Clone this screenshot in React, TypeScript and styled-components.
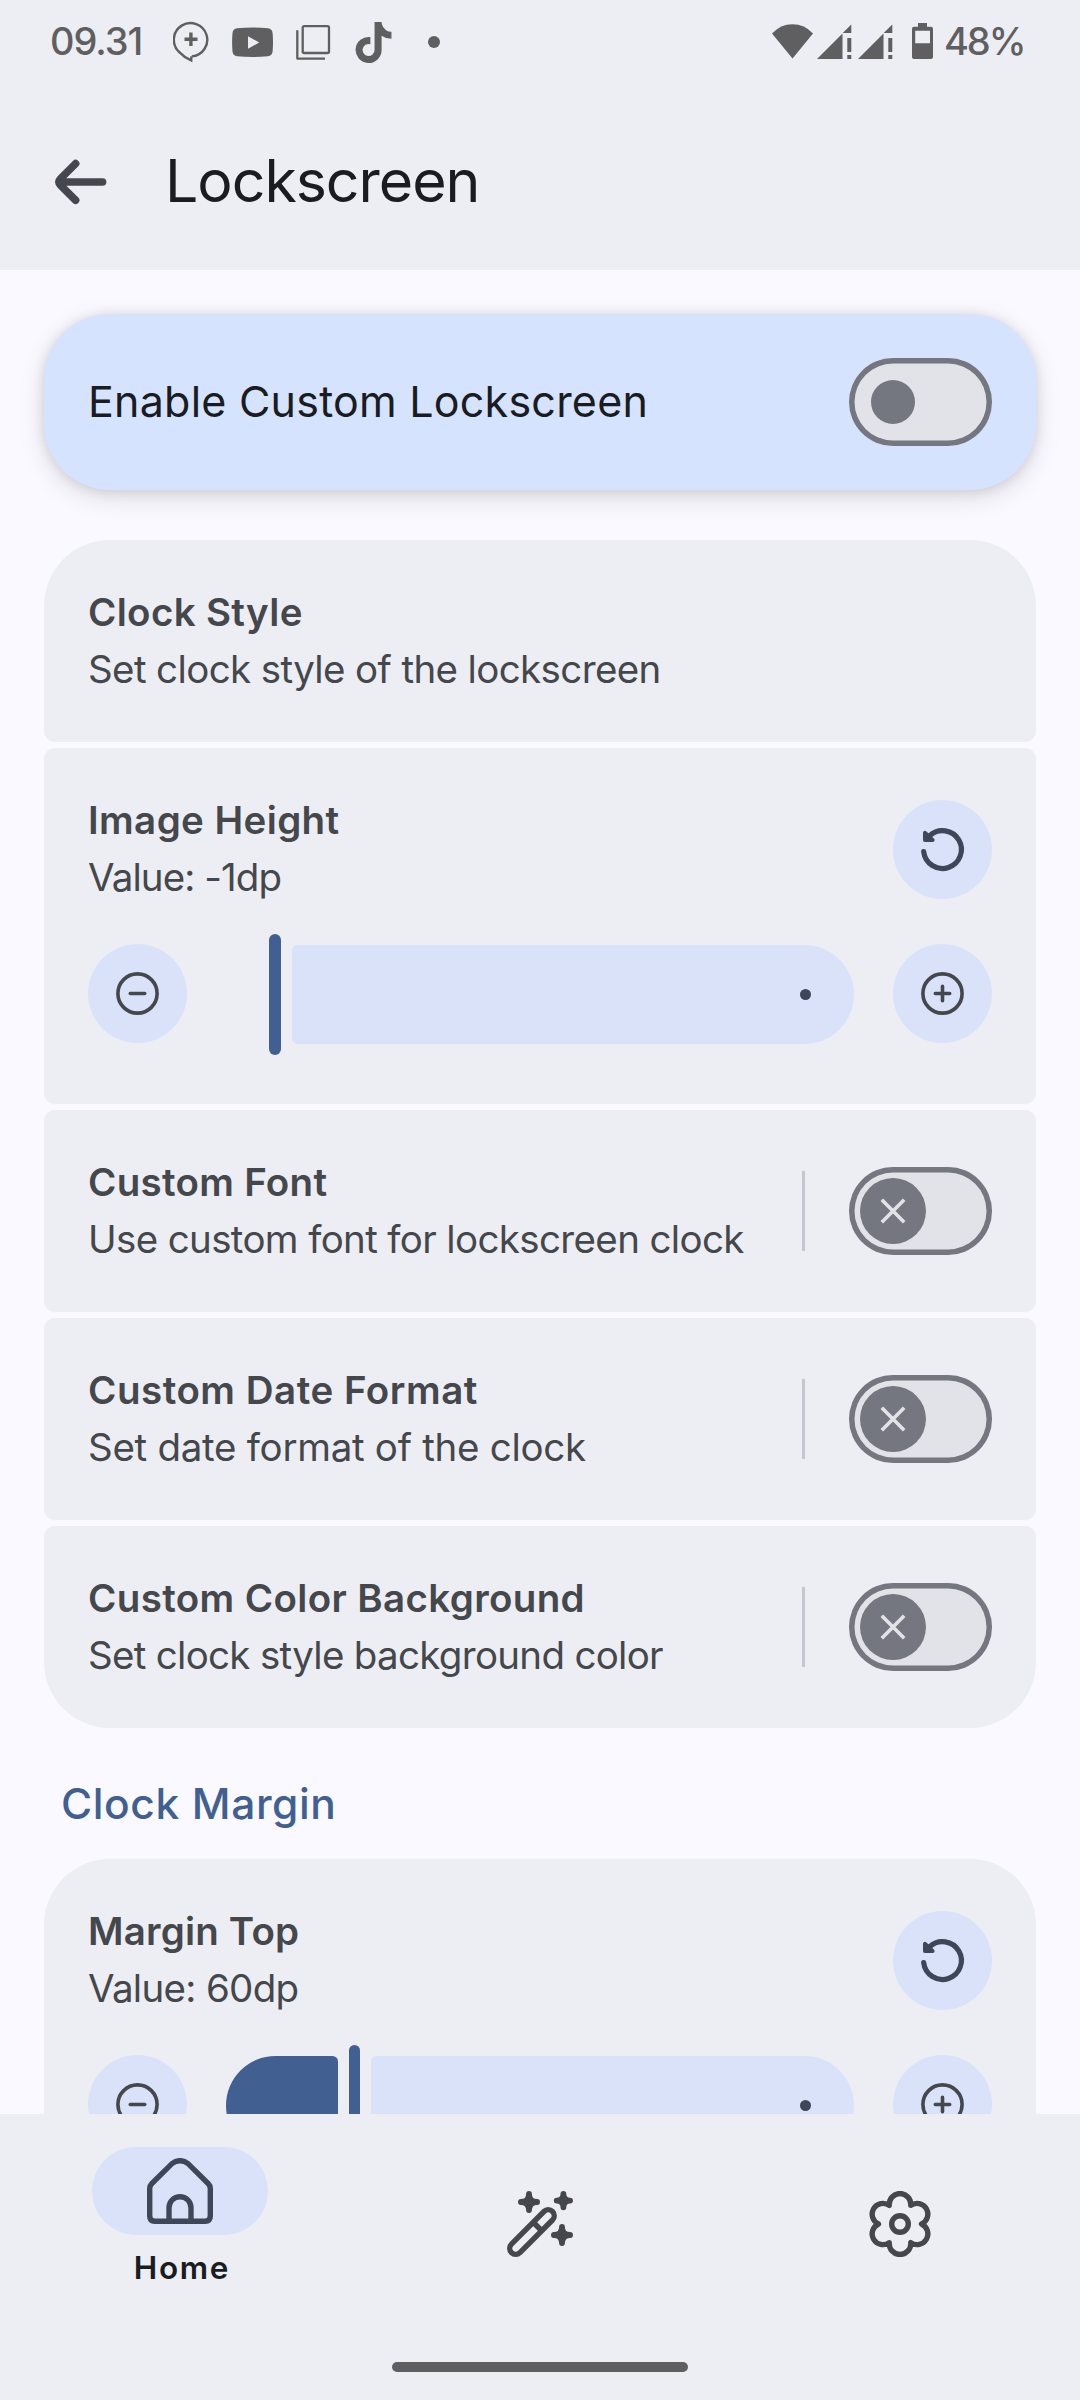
import React from "react";
import styled, { createGlobalStyle } from "styled-components";
import { FaTiktok } from "react-icons/fa";

const color = {
  surface: "#faf9ff",
  container: "#edeef3",
  primaryContainer: "#d6e3ff",
  secondaryContainer: "#dae2fa",
  onSecondaryContainer: "#3e4759",
  primary: "#415f91",
  onSurface: "#191c20",
  onSurfaceVariant: "#44474b",
  outline: "#74777f",
  outlineVariant: "#c4c6d0",
  track: "#e2e3e8",
  status: "#5f5f61",
};

const GlobalStyle = createGlobalStyle`
  body {
    margin: 0;
    background: ${color.surface};
    font-family: Inter, Roboto, sans-serif;
  }
  svg { display: block; flex: none; }
`;

const Screen = styled.div`
  display: flex;
  flex-direction: column;
  width: 1080px;
  height: 2400px;
  overflow: hidden;
  background: ${color.surface};
`;

const Header = styled.header`
  flex: none;
  height: 270px;
  background: ${color.container};
`;

const StatusBar = styled.div`
  display: flex;
  align-items: center;
  justify-content: space-between;
  height: 80px;
  padding: 0 52px 0 50px;
  color: ${color.status};
`;

const StatusGroup = styled.div`
  display: flex;
  align-items: center;
`;

const StatusText = styled.span<{ $width: number; $tracking: number; $drop: number }>`
  box-sizing: border-box;
  width: ${(p) => p.$width}px;
  padding-top: ${(p) => p.$drop}px;
  font-size: 38px;
  font-weight: 500;
  line-height: 80px;
  letter-spacing: ${(p) => p.$tracking}px;
  white-space: nowrap;
`;

const StatusIcons = styled.div`
  display: flex;
  align-items: center;
  gap: 22.75px;
`;

const TiktokSlot = styled.div`
  display: flex;
  margin: 5px 11px 0 0;
`;

const Dot = styled.span<{ $size: number; $color: string }>`
  width: ${(p) => p.$size}px;
  height: ${(p) => p.$size}px;
  border-radius: 50%;
  background: ${(p) => p.$color};
`;

const StatusDot = styled(Dot)`
  margin-top: 4px;
`;

const AppBar = styled.div`
  display: flex;
  align-items: center;
  gap: 55px;
  height: 204px;
  padding-left: 50px;
`;

const PageTitle = styled.h1`
  margin: 0;
  padding-bottom: 2px;
  font-size: 59px;
  font-weight: 400;
  line-height: 80px;
  letter-spacing: -1.02px;
  color: ${color.onSurface};
`;

const Content = styled.main`
  flex: 1;
  min-height: 0;
  overflow: hidden;
  padding: 44px 44px 0;
`;

const MasterSwitch = styled.section`
  display: flex;
  align-items: center;
  justify-content: space-between;
  box-sizing: border-box;
  height: 176px;
  padding: 0 44px;
  margin-bottom: 50px;
  border-radius: 66px;
  background: ${color.primaryContainer};
  box-shadow: 0 7px 26px rgba(0, 0, 0, 0.13), 0 1px 12px rgba(0, 0, 0, 0.1);
`;

const MasterLabel = styled.span`
  padding-bottom: 2px;
  font-size: 43px;
  line-height: 58px;
  letter-spacing: 0.23px;
  color: ${color.onSurface};
`;

const CardList = styled.div`
  display: flex;
  flex-direction: column;
  gap: 6px;
`;

const Card = styled.section`
  box-sizing: border-box;
  padding: 44px;
  border-radius: 11px;
  background: ${color.container};

  &:first-child {
    border-top-left-radius: 66px;
    border-top-right-radius: 66px;
  }
  &:last-child {
    border-bottom-left-radius: 66px;
    border-bottom-right-radius: 66px;
  }
`;

const SliderCard = styled(Card)`
  padding-bottom: 61px;
`;

const CardRow = styled.div`
  display: flex;
  align-items: center;
  height: 114px;
`;

const CardText = styled.div`
  flex: 1;
  min-width: 0;
  white-space: nowrap;
  color: ${color.onSurfaceVariant};
  font-size: 38.5px;
`;

const CardTitle = styled.div<{ $tracking: number }>`
  font-weight: 600;
  line-height: 56px;
  letter-spacing: ${(p) => p.$tracking}px;
`;

const CardSummary = styled.div<{ $tracking: number }>`
  line-height: 58px;
  letter-spacing: ${(p) => p.$tracking}px;
`;

const Divider = styled.span`
  width: 3px;
  height: 80px;
  margin-right: 44px;
  background: ${color.outlineVariant};
`;

const SwitchTrack = styled.span<{ $inset: number }>`
  display: flex;
  align-items: center;
  flex: none;
  box-sizing: border-box;
  width: 143px;
  height: 88px;
  padding-left: ${(p) => p.$inset}px;
  border-radius: 44px;
  background: ${color.track};
  box-shadow: inset 0 0 0 5.5px ${color.outline};
`;

const SwitchThumb = styled.span<{ $size: number }>`
  display: flex;
  align-items: center;
  justify-content: center;
  width: ${(p) => p.$size}px;
  height: ${(p) => p.$size}px;
  border-radius: 50%;
  background: ${color.outline};
`;

const RoundButton = styled.button`
  display: flex;
  align-items: center;
  justify-content: center;
  flex: none;
  width: 99px;
  height: 99px;
  padding: 0;
  border: 0;
  border-radius: 50%;
  background: ${color.secondaryContainer};
`;

const SliderRow = styled.div`
  display: grid;
  grid-template-columns: 99px 1fr 99px;
  align-items: center;
  column-gap: 39px;
  height: 99px;
  margin-top: 38px;
`;

const Slider = styled.div`
  display: flex;
  align-items: center;
  gap: 11px;
  box-sizing: border-box;
  height: 99px;
  padding-top: 1px;
`;

const SliderActive = styled.span<{ $empty: boolean }>`
  flex: none;
  height: 99px;
  border-radius: 49.5px 5.5px 5.5px 49.5px;
  background: ${(p) => (p.$empty ? "transparent" : color.primary)};
`;

const SliderHandle = styled.span`
  flex: none;
  width: 11.5px;
  height: 121px;
  border-radius: 6px;
  background: ${color.primary};
`;

const SliderRest = styled.span`
  display: flex;
  align-items: center;
  justify-content: flex-end;
  flex: 1;
  box-sizing: border-box;
  height: 99px;
  padding-right: 43.5px;
  border-radius: 5.5px 49.5px 49.5px 5.5px;
  background: ${color.secondaryContainer};
`;

const SectionTitle = styled.h2`
  box-sizing: border-box;
  height: 131px;
  margin: 0;
  padding: 46px 0 0 17px;
  font-size: 42.5px;
  font-weight: 500;
  line-height: 59px;
  letter-spacing: 0.6px;
  color: ${color.primary};
`;

const BottomBar = styled.footer`
  flex: none;
  display: flex;
  flex-direction: column;
  align-items: center;
  height: 286px;
  background: ${color.container};
`;

const Nav = styled.nav`
  display: grid;
  grid-template-columns: repeat(3, 1fr);
  width: 100%;
  height: 220px;
`;

const NavItem = styled.a`
  display: flex;
  flex-direction: column;
  align-items: center;
  justify-content: center;
  color: ${color.onSurfaceVariant};
`;

const ActiveNavItem = styled(NavItem)`
  justify-content: flex-start;
  padding-top: 33px;
`;

const NavPill = styled.span`
  display: flex;
  align-items: center;
  justify-content: center;
  width: 176px;
  height: 88px;
  border-radius: 44px;
  background: ${color.secondaryContainer};
  color: ${color.onSecondaryContainer};
`;

const NavLabel = styled.span`
  margin-top: 12px;
  padding-left: 4px;
  font-size: 31.5px;
  font-weight: 600;
  line-height: 41px;
  letter-spacing: 1.66px;
  color: ${color.onSurface};
`;

const GestureBar = styled.span`
  width: 296px;
  height: 10px;
  margin-top: 28px;
  border-radius: 5px;
  background: ${color.status};
`;

const BubbleIcon = () => (
  <svg width="36" height="48" viewBox="173.5 16 36 48" fill="none" stroke="currentColor">
    <path
      d="M192.3 56.4 A16.7 16.7 0 1 0 179.5 51.8 Q185 57.6 191.7 60.4 L191.9 56.4"
      strokeWidth="2.4"
    />
    <path d="M185 39.3H198M191.4 32.4V46" strokeWidth="3.4" />
  </svg>
);

const VideoIcon = () => (
  <svg width="41" height="48" viewBox="232 16 41 48" fill="currentColor">
    <path
      fillRule="evenodd"
      d="M237 28.3Q252.5 26.6 268 28.3Q272 28.8 272.6 33Q273.4 42 272.6 51.5Q272 55.8 268 56.2Q252.5 57.8 237 56.2Q233 55.8 232.5 51.5Q231.7 42 232.5 33Q233 28.8 237 28.3ZM248 36.2V48.8L259.2 42.5Z"
    />
  </svg>
);

const CopyIcon = () => (
  <svg width="35" height="48" viewBox="296 16 35 48" fill="none" stroke="currentColor" strokeWidth="2.3">
    <rect x="302.7" y="26.2" width="26.3" height="26.8" rx="1.5" />
    <path d="M297.3 30.3V58.6H325" strokeLinejoin="round" />
  </svg>
);

const WifiIcon = () => (
  <svg width="45" height="48" viewBox="772 16 45 48" fill="currentColor">
    <path d="M772 33.4Q780.5 24.2 792.5 24.2T813 33.4L792.5 58.5Z" />
  </svg>
);

const SignalIcon = () => (
  <svg width="41" height="48" viewBox="816.5 16 41 48" fill="currentColor">
    <path d="M816.5 59H842V33.5ZM842.2 33H850.8V24.4ZM846.8 38H850.8V52H846.8ZM846.8 55H850.8V59H846.8Z" />
  </svg>
);

const BatteryIcon = () => (
  <svg width="45" height="48" viewBox="899 16 45 48" fill="currentColor">
    <path
      fillRule="evenodd"
      d="M918 23H927V26.8H931Q933 26.8 933 28.8V57Q933 59 931 59H914Q912 59 912 57V28.8Q912 26.8 914 26.8H918ZM915.2 30.7V43.2H930V30.7Z"
    />
  </svg>
);

const BackIcon = () => (
  <svg
    width="60"
    height="60"
    viewBox="50 152 60 60"
    fill="none"
    stroke="#44474e"
    strokeWidth="7.6"
    strokeLinecap="round"
    strokeLinejoin="round"
  >
    <path d="M75.6 163.6L60.6 178.6Q57.4 182 60.6 185.3L75.6 200.2M61 182H102.6" />
  </svg>
);

const CloseIcon = () => (
  <svg width="26" height="26" viewBox="0 0 26 26" fill="none" stroke={color.track} strokeWidth="3.6">
    <path d="M1.8 1.8L24.2 24.2M24.2 1.8L1.8 24.2" />
  </svg>
);

const ResetIcon = () => (
  <svg
    width="51"
    height="51"
    viewBox="-25.5 -25.5 51 51"
    fill="none"
    stroke={color.onSecondaryContainer}
    strokeLinecap="round"
    strokeLinejoin="round"
  >
    <path d="M-18.8 2.2A18.9 18.9 0 1 0 -12.8 -13.9" strokeWidth="5.2" />
    <path d="M-17.6 -16.8V-9.4H-9.8L-13 -12.6Z" fill={color.onSecondaryContainer} strokeWidth="3.8" />
  </svg>
);

const StepIcon = ({ plus = false }: { plus?: boolean }) => (
  <svg
    width="51"
    height="51"
    viewBox="-25.5 -25.5 51 51"
    fill="none"
    stroke={color.onSurfaceVariant}
    strokeWidth="3.6"
    strokeLinecap="round"
  >
    <circle r="19.6" />
    <path d={plus ? "M-7.2 0H7.2M0 -7.2V7.2" : "M-7.2 0H7.2"} />
  </svg>
);

const HomeIcon = () => (
  <svg width="66" height="66" viewBox="0 0 66 66" fill="none" stroke="currentColor" strokeWidth="5.4">
    <path d="M2.7 30.6Q2.7 27.6 4.9 25.5L24.9 5.7Q33 -0.3 41.1 5.7L61.1 25.5Q63.3 27.6 63.3 30.6V58Q63.3 63.2 58.2 63.2H7.8Q2.7 63.2 2.7 58Z" />
    <path d="M22 63V49.7A11 11 0 0 1 44 49.7V63" />
  </svg>
);

const Sparkle = ({ x, y, r }: { x: number; y: number; r: number }) => {
  const t = r - 2.9;
  return (
    <path
      transform={`translate(${x} ${y})`}
      d={`M0 ${-t}Q0 0 ${t} 0Q0 0 0 ${t}Q0 0 ${-t} 0Q0 0 0 ${-t}Z`}
      fill="currentColor"
      strokeWidth="5.8"
      strokeLinejoin="round"
    />
  );
};

const WandIcon = () => (
  <svg width="66" height="66" viewBox="0 0 66 66" fill="none" stroke="currentColor" strokeWidth="5.4">
    <Sparkle x={22} y={11} r={11} />
    <Sparkle x={56.4} y={9.6} r={9.6} />
    <Sparkle x={55} y={44} r={11} />
    <g transform="translate(8.7 57.3) rotate(-45)">
      <rect x="-6" y="-6" width="58" height="12" rx="6" />
      <path d="M30.8 -6V6" />
    </g>
  </svg>
);

const lobes = Array.from({ length: 6 }, (_, i) => {
  const a = ((i + 1) * Math.PI) / 3;
  return `A10.8 10.8 0 1 1 ${(21.5 * Math.cos(a)).toFixed(2)} ${(21.5 * Math.sin(a)).toFixed(2)}`;
}).join("");

const SettingsIcon = () => (
  <svg
    width="66"
    height="66"
    viewBox="-33 -33 66 66"
    fill="none"
    stroke="currentColor"
    strokeWidth="5.4"
    strokeLinejoin="round"
  >
    <path d={`M21.5 0${lobes}Z`} />
    <circle r="8.3" />
  </svg>
);

const Switch = ({ icon = false }: { icon?: boolean }) => (
  <SwitchTrack role="switch" aria-checked={false} $inset={icon ? 11 : 22}>
    <SwitchThumb $size={icon ? 66 : 44}>{icon && <CloseIcon />}</SwitchThumb>
  </SwitchTrack>
);

type TextProps = { title: string; titleTracking: number; summary: string; summaryTracking: number };

const PreferenceText = ({ title, titleTracking, summary, summaryTracking }: TextProps) => (
  <CardText>
    <CardTitle $tracking={titleTracking}>{title}</CardTitle>
    <CardSummary $tracking={summaryTracking}>{summary}</CardSummary>
  </CardText>
);

const SwitchPreference = (props: TextProps) => (
  <Card>
    <CardRow>
      <PreferenceText {...props} />
      <Divider />
      <Switch icon />
    </CardRow>
  </Card>
);

const SLIDER_SPAN = 529;

const SliderPreference = ({ fraction, ...text }: TextProps & { fraction: number }) => (
  <SliderCard>
    <CardRow>
      <PreferenceText {...text} />
      <RoundButton aria-label="Reset">
        <ResetIcon />
      </RoundButton>
    </CardRow>
    <SliderRow>
      <RoundButton aria-label="Decrease">
        <StepIcon />
      </RoundButton>
      <Slider>
        <SliderActive $empty={fraction === 0} style={{ width: 32.25 + SLIDER_SPAN * fraction }} />
        <SliderHandle />
        <SliderRest>
          <Dot $size={11} $color={color.onSecondaryContainer} />
        </SliderRest>
      </Slider>
      <RoundButton aria-label="Increase">
        <StepIcon plus />
      </RoundButton>
    </SliderRow>
  </SliderCard>
);

export default function App() {
  return (
    <Screen>
      <GlobalStyle />
      <Header>
        <StatusBar>
          <StatusGroup>
            <StatusText $width={123} $tracking={-1.08} $drop={1}>09.31</StatusText>
            <StatusIcons>
              <BubbleIcon />
              <VideoIcon />
              <CopyIcon />
              <TiktokSlot>
                <FaTiktok size={41} />
              </TiktokSlot>
              <StatusDot $size={12} $color={color.status} />
            </StatusIcons>
          </StatusGroup>
          <StatusGroup>
            <WifiIcon />
            <SignalIcon />
            <SignalIcon />
            <BatteryIcon />
            <StatusText $width={84} $tracking={-2.1} $drop={2}>48%</StatusText>
          </StatusGroup>
        </StatusBar>
        <AppBar>
          <BackIcon />
          <PageTitle>Lockscreen</PageTitle>
        </AppBar>
      </Header>

      <Content>
        <MasterSwitch>
          <MasterLabel>Enable Custom Lockscreen</MasterLabel>
          <Switch />
        </MasterSwitch>

        <CardList>
          <Card>
            <CardRow>
              <PreferenceText
                title="Clock Style"
                titleTracking={0.34}
                summary="Set clock style of the lockscreen"
                summaryTracking={-0.62}
              />
            </CardRow>
          </Card>
          <SliderPreference
            title="Image Height"
            titleTracking={0.4}
            summary="Value: -1dp"
            summaryTracking={-0.92}
            fraction={0}
          />
          <SwitchPreference
            title="Custom Font"
            titleTracking={0.29}
            summary="Use custom font for lockscreen clock"
            summaryTracking={-0.64}
          />
          <SwitchPreference
            title="Custom Date Format"
            titleTracking={0.52}
            summary="Set date format of the clock"
            summaryTracking={-0.28}
          />
          <SwitchPreference
            title="Custom Color Background"
            titleTracking={0.37}
            summary="Set clock style background color"
            summaryTracking={-0.7}
          />
        </CardList>

        <SectionTitle>Clock Margin</SectionTitle>

        <CardList>
          <SliderPreference
            title="Margin Top"
            titleTracking={0.2}
            summary="Value: 60dp"
            summaryTracking={-0.68}
            fraction={0.1503}
          />
        </CardList>
      </Content>

      <BottomBar>
        <Nav>
          <ActiveNavItem>
            <NavPill>
              <HomeIcon />
            </NavPill>
            <NavLabel>Home</NavLabel>
          </ActiveNavItem>
          <NavItem>
            <WandIcon />
          </NavItem>
          <NavItem>
            <SettingsIcon />
          </NavItem>
        </Nav>
        <GestureBar />
      </BottomBar>
    </Screen>
  );
}
